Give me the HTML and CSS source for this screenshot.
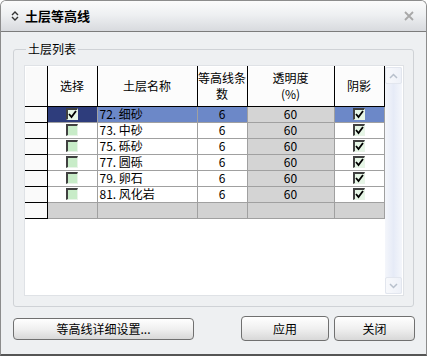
FILE: index.html
```
<!DOCTYPE html>
<html>
<head>
<meta charset="utf-8">
<link rel="stylesheet" href="styles.css">
</head>
<body>
<div class="window">
  <div class="titlebar">
    <svg class="ticon" width="10" height="12" viewBox="0 0 10 12"><path d="M2 5 L5 2 L8 5 M2 7 L5 10 L8 7" fill="none" stroke="#333" stroke-width="1.4"/></svg>
    <span class="title">土层等高线</span>
    <svg class="close" width="10" height="10" viewBox="0 0 10 10"><path d="M1 1 L9 9 M9 1 L1 9" stroke="#a8a8a8" stroke-width="1.8"/></svg>
  </div>
  <div class="content">
    <fieldset class="group">
      <legend>土层列表</legend>
      <div class="listview">
        <table class="grid">
          <colgroup><col class="c0"><col class="c1"><col class="c2"><col class="c3"><col class="c4"><col class="c5"></colgroup>
          <thead>
            <tr><th class="rh"></th><th>选择</th><th>土层名称</th><th>等高线条<br>数</th><th>透明度<br>(%)</th><th>阴影</th></tr>
          </thead>
          <tbody>
            <tr class="sel"><td class="rh"></td><td class="chk navy"><span class="cb on"><svg width="9" height="9" viewBox="0 0 9 9"><path d="M1 4 L3.5 7 L8 1" fill="none" stroke="#000" stroke-width="1.8"/></svg></span></td><td class="name">72. 细砂</td><td class="num">6</td><td class="num ro">60</td><td class="chk"><span class="cb on"><svg width="9" height="9" viewBox="0 0 9 9"><path d="M1 4 L3.5 7 L8 1" fill="none" stroke="#000" stroke-width="1.8"/></svg></span></td></tr>
            <tr><td class="rh"></td><td class="chk"><span class="cb"></span></td><td class="name">73. 中砂</td><td class="num">6</td><td class="num ro">60</td><td class="chk"><span class="cb on"><svg width="9" height="9" viewBox="0 0 9 9"><path d="M1 4 L3.5 7 L8 1" fill="none" stroke="#000" stroke-width="1.8"/></svg></span></td></tr>
            <tr><td class="rh"></td><td class="chk"><span class="cb"></span></td><td class="name">75. 砾砂</td><td class="num">6</td><td class="num ro">60</td><td class="chk"><span class="cb on"><svg width="9" height="9" viewBox="0 0 9 9"><path d="M1 4 L3.5 7 L8 1" fill="none" stroke="#000" stroke-width="1.8"/></svg></span></td></tr>
            <tr><td class="rh"></td><td class="chk"><span class="cb"></span></td><td class="name">77. 圆砾</td><td class="num">6</td><td class="num ro">60</td><td class="chk"><span class="cb on"><svg width="9" height="9" viewBox="0 0 9 9"><path d="M1 4 L3.5 7 L8 1" fill="none" stroke="#000" stroke-width="1.8"/></svg></span></td></tr>
            <tr><td class="rh"></td><td class="chk"><span class="cb"></span></td><td class="name">79. 卵石</td><td class="num">6</td><td class="num ro">60</td><td class="chk"><span class="cb on"><svg width="9" height="9" viewBox="0 0 9 9"><path d="M1 4 L3.5 7 L8 1" fill="none" stroke="#000" stroke-width="1.8"/></svg></span></td></tr>
            <tr><td class="rh"></td><td class="chk"><span class="cb"></span></td><td class="name">81. 风化岩</td><td class="num">6</td><td class="num ro">60</td><td class="chk"><span class="cb on"><svg width="9" height="9" viewBox="0 0 9 9"><path d="M1 4 L3.5 7 L8 1" fill="none" stroke="#000" stroke-width="1.8"/></svg></span></td></tr>
            <tr class="empty"><td class="rh"></td><td></td><td></td><td></td><td></td><td></td></tr>
          </tbody>
        </table>
        <div class="scrollbar">
          <div class="sbtn"><svg width="9" height="6" viewBox="0 0 9 6"><path d="M1 5 L4.5 1.5 L8 5" fill="none" stroke="#b8c0cc" stroke-width="1.5"/></svg></div>
          <div class="strack"></div>
          <div class="sbtn"><svg width="9" height="6" viewBox="0 0 9 6"><path d="M1 1 L4.5 4.5 L8 1" fill="none" stroke="#b8c0cc" stroke-width="1.5"/></svg></div>
        </div>
      </div>
    </fieldset>
    <div class="buttons">
      <button class="btn wide">等高线详细设置...</button>
      <div class="right">
        <button class="btn apply">应用</button>
        <button class="btn closebtn">关闭</button>
      </div>
    </div>
  </div>
</div>
</body>
</html>
```
FILE: styles.css
```
* { box-sizing: border-box; }
html, body { margin: 0; padding: 0; background: #ffffff; }
body { font-family: "Noto Sans CJK SC", "Noto Sans", sans-serif; font-size: 12px; color: #000; }
.window {
  width: 427px; height: 356px;
  border: 1px solid #8c8c8c; border-bottom: 2px solid #555;
  border-radius: 6px 6px 0 0;
  background: #eef0f2;
  display: flex; flex-direction: column;
  overflow: hidden;
}
.titlebar {
  height: 31px; flex: none;
  border-bottom: 1px solid #7c7c7c;
  background: linear-gradient(#fbfbfb, #eef0f2 45%, #d8dade);
  display: flex; align-items: center;
  padding: 0 12px 0 9px;
}
.ticon { margin-right: 5px; }
.title { font-weight: bold; font-size: 13px; line-height: 16px; flex: 1; }
.close { flex: none; }
.content { flex: 1; padding: 9px 12px 0 12px; display: flex; flex-direction: column; }
.group {
  margin: 0; padding: 8px 9px 10px 10px;
  border: 1px solid #cfd2d6; border-radius: 3px;
  width: 400px;
}
.group legend { padding: 0 2px; margin-left: 2px; font-size: 12px; line-height: 16px; }
.listview {
  height: 231px; background: #fff;
  border: 1px solid #dfe2e6;
  display: flex; justify-content: space-between;
}
.grid {
  border-collapse: collapse; table-layout: fixed;
  width: 359px; align-self: flex-start;
}
.c0 { width: 22px; } .c1 { width: 50px; } .c2 { width: 100px; } .c3 { width: 50px; } .c4 { width: 87px; } .c5 { width: 50px; }
.grid th {
  height: 40px; padding: 0; font-weight: normal; font-size: 12px; line-height: 16px;
  background: #fcfcfc;
  border-right: 1px solid #000; border-bottom: 1px solid #000;
  box-shadow: inset 1px 1px 0 #fff;
  text-align: center;
}
.grid td {
  height: 16px; padding: 0; font-size: 12px; line-height: 14px;
  border-right: 1px solid #a0a0a0; border-bottom: 1px solid #a0a0a0;
  white-space: nowrap; overflow: hidden;
}
.grid tbody tr { height: 16px; }
.grid td.rh, .grid th.rh {
  background: #fafafa;
  border-right: 1px solid #000; border-bottom: 1px solid #000;
}
.name { padding-left: 2px !important; text-align: left; }
.num { text-align: center; }
.ro { background: #d4d4d4; }
.chk { text-align: center; }
.sel td { background: #6c88c8; }
.sel td.navy { background: #2e3d7c; }
.sel td.ro { background: #d4d4d4; }
.sel td.rh { background: #fafafa; }
.empty td { background: #d2d2d2; }
.empty td.rh { background: #fafafa; }
.cb {
  display: inline-block; vertical-align: top;
  width: 12px; height: 12px; margin-top: 1px;
  border-top: 2px solid #404040; border-left: 2px solid #404040;
  border-right: 1px solid #e8f4e8; border-bottom: 1px solid #e8f4e8;
  background: #c8ecc8;
  line-height: 0;
}
.cb.on { background: #e6f6e6; }
.cb svg { display: block; }
.scrollbar {
  width: 17px; margin: 1px 1px 1px 0;
  display: flex; flex-direction: column;
  background: linear-gradient(90deg, #f4f6fb, #e6ebf7 50%, #f4f6fb);
}
.sbtn {
  height: 17px; flex: none;
  border: 1px solid #e2e6ee; border-radius: 2px;
  background: linear-gradient(90deg, #f8f9fc, #eef1f8);
  display: flex; align-items: center; justify-content: center;
}
.strack { flex: 1; }
.buttons {
  margin-top: 9px; display: flex; justify-content: space-between; align-items: flex-end;
  width: 402px;
}
.right { display: flex; gap: 5px; }
.btn {
  font-family: "Noto Sans CJK SC", "Noto Sans", sans-serif; font-size: 12px; color: #000;
  border: 1px solid #707070; border-radius: 4px;
  background: linear-gradient(#ffffff, #f0f0f0 50%, #d8d8d8);
  padding: 0; line-height: 14px;
}
.wide { width: 181px; height: 22px; margin-bottom: 1px; }
.apply { width: 88px; height: 25px; }
.closebtn { width: 81px; height: 25px; }
```
